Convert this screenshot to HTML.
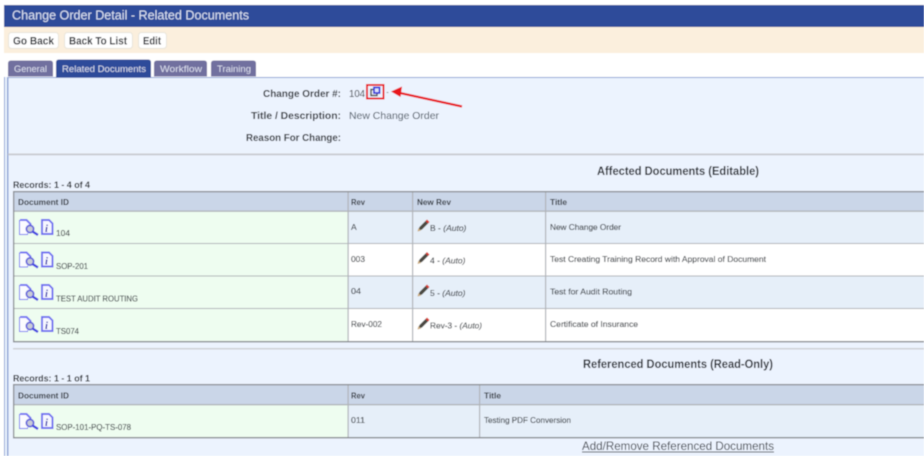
<!DOCTYPE html>
<html><head><meta charset="utf-8"><title>Change Order Detail</title>
<style>
html,body{margin:0;padding:0;width:924px;height:456px;overflow:hidden;background:#fff}
svg{display:block;position:absolute;left:0;top:0}
text{font-family:"Liberation Sans",sans-serif;fill:#33383e;white-space:pre}
.b{font-weight:bold;fill:#24282f}
.h{font-weight:bold;font-size:8.5px;fill:#2c3138}
.s{font-size:8.5px;stroke:#3a3f45;stroke-width:.12px}
.l{font-size:10.5px;font-weight:bold;fill:#2a2e35}
.t{font-size:9.5px;fill:#dcdfee}
</style></head><body>
<svg width="924" height="456" viewBox="0 0 924 456" xmlns="http://www.w3.org/2000/svg">
<defs>
<filter id="bl" x="0" y="0" width="100%" height="100%"><feGaussianBlur stdDeviation="0.45"/></filter>
<g id="ic">
  <path d="M20 220h6.500l4 4v4M20 220v14h8" fill="#fbfbff" stroke="#7474f2" stroke-width="2"/>
  <path d="M20 221h6v5h4v3l-3 5h-7z" fill="#fbfbff"/>
  <circle cx="30" cy="229" r="3.600" fill="#c9ccd6" stroke="#6060dc" stroke-width="1.700"/>
  <path d="M32.500 231.500l5.500 3.500" stroke="#4444e0" stroke-width="2.400"/>
  <path d="M42 220h7l3.500 3.500v10.500h-10.500z" fill="#f6f7ff" stroke="#7070f0" stroke-width="1.900"/>
  <text x="45" y="232" style="font-family:'Liberation Serif',serif;font-weight:bold;font-style:italic;font-size:10.500px;fill:#1c1ca8">i</text>
</g>
<g id="pn">
  <path d="M418 231l1.500-4 6.500-6.500 2.500 2.500-6.500 6.500z" fill="#4c4a42"/>
  <path d="M425.500 221l1.500-1.500 2.500 2.500-1.500 1.500z" fill="#d83a30"/>
  <path d="M417.500 231.500l1-3.500 2.500 2.500z" fill="#c9a878"/>
</g>
</defs>
<g filter="url(#bl)">
<rect width="924" height="456" fill="#fff"/>
<rect x="4" y="5" width="920" height="22" fill="#2e4c9a"/>
<rect x="4" y="27" width="920" height="26" fill="#fbefdd"/>
<text x="12" y="19.500" font-size="13" textLength="237" lengthAdjust="spacingAndGlyphs" style="fill:#dbe2f3">Change Order Detail - Related Documents</text>

<rect x="8.500" y="32.500" width="50" height="16" rx="3" fill="#fff" stroke="#e8e4da"/>
<rect x="64.500" y="32.500" width="68" height="16" rx="3" fill="#fff" stroke="#e8e4da"/>
<rect x="138.500" y="32.500" width="28" height="16" rx="3" fill="#fff" stroke="#e8e4da"/>
<text class="b" x="13" y="44.500" font-size="11" textLength="41" lengthAdjust="spacingAndGlyphs">Go Back</text>
<text class="b" x="69" y="44.500" font-size="11" textLength="58" lengthAdjust="spacingAndGlyphs">Back To List</text>
<text class="b" x="143" y="44.500" font-size="11" textLength="18" lengthAdjust="spacingAndGlyphs">Edit</text>

<rect x="4" y="77" width="920" height="379" fill="#ecf3fe"/>
<rect x="4" y="77" width="1" height="379" fill="#8fa4d6"/>
<rect x="7" y="77" width="1.500" height="379" fill="#8fa4d6"/>
<rect x="7" y="77" width="917" height="1" fill="#8fa4d6"/>

<path d="M8 76.500v-13q0-3 3-3h39q3 0 3 3v13z" fill="#71709f"/>
<path d="M56 77.500v-15q0-3 3-3h89q3 0 3 3v15z" fill="#2e4c9a"/>
<path d="M154 76.500v-13q0-3 3-3h47q3 0 3 3v13z" fill="#71709f"/>
<path d="M211 76.500v-13q0-3 3-3h39q3 0 3 3v13z" fill="#71709f"/>
<text class="t" x="14" y="72" textLength="33" lengthAdjust="spacingAndGlyphs">General</text>
<text class="t" x="62" y="72" textLength="84" lengthAdjust="spacingAndGlyphs">Related Documents</text>
<text class="t" x="160" y="72" textLength="42" lengthAdjust="spacingAndGlyphs">Workflow</text>
<text class="t" x="217" y="72" textLength="34" lengthAdjust="spacingAndGlyphs">Training</text>

<text class="l" x="263" y="97" textLength="78" lengthAdjust="spacingAndGlyphs">Change Order #:</text>
<text class="l" x="251" y="119" textLength="90" lengthAdjust="spacingAndGlyphs">Title / Description:</text>
<text class="l" x="246" y="141" textLength="95" lengthAdjust="spacingAndGlyphs">Reason For Change:</text>
<text x="349" y="97" font-size="10.500" textLength="16" lengthAdjust="spacingAndGlyphs">104</text>
<text x="349" y="119" font-size="10.500" textLength="90" lengthAdjust="spacingAndGlyphs" style="fill:#44505c">New Change Order</text>

<rect x="367" y="85" width="16.500" height="13.500" fill="none" stroke="#e8141c" stroke-width="2"/>
<rect x="371" y="89.500" width="6" height="6" fill="#eef2fa" stroke="#444" stroke-width="1.400"/>
<rect x="374" y="87.500" width="5.500" height="5.500" fill="#dfe3fb" stroke="#3030d8" stroke-width="1.700"/>
<path d="M386.500 92.500h2" stroke="#999" stroke-width="1"/>
<path d="M462 106.500L400 93" stroke="#e8141c" stroke-width="2.200"/>
<path d="M391 91.500l11-5-1.500 10.500z" fill="#e8141c"/>

<rect x="8" y="153.500" width="916" height="1.800" fill="#c9cbd0"/>
<text class="b" x="597" y="175" font-size="11.500" textLength="162" lengthAdjust="spacingAndGlyphs">Affected Documents (Editable)</text>
<text class="b" x="13" y="188" font-size="9.500" textLength="77" lengthAdjust="spacingAndGlyphs">Records: 1 - 4 of 4</text>

<!-- Table 1 -->
<rect x="14" y="192" width="910" height="19" fill="#cad6e8"/>
<rect x="14" y="211" width="334" height="130" fill="#eefdf0"/>
<rect x="348" y="211" width="576" height="32" fill="#e6eff9"/>
<rect x="348" y="243" width="576" height="33" fill="#fff"/>
<rect x="348" y="276" width="576" height="32" fill="#e6eff9"/>
<rect x="348" y="308" width="576" height="33" fill="#fff"/>
<g fill="#b0b3b8">
<rect x="14" y="210.500" width="910" height="1.300"/>
<rect x="14" y="243" width="910" height="1"/>
<rect x="14" y="275.500" width="910" height="1"/>
<rect x="14" y="308" width="910" height="1"/>
<rect x="347.500" y="192" width="1.200" height="149"/>
<rect x="412" y="192" width="1.200" height="149"/>
<rect x="545" y="192" width="1.200" height="149"/>
</g>
<rect x="13" y="191" width="911" height="1.300" fill="#8a8d92"/>
<rect x="13" y="341" width="911" height="1.400" fill="#8a8d92"/>
<rect x="13" y="191" width="1.300" height="151" fill="#8a8d92"/>

<text class="h" x="18" y="205" textLength="51" lengthAdjust="spacingAndGlyphs">Document ID</text>
<text class="h" x="351" y="205" textLength="14" lengthAdjust="spacingAndGlyphs">Rev</text>
<text class="h" x="417" y="205" textLength="34" lengthAdjust="spacingAndGlyphs">New Rev</text>
<text class="h" x="550" y="205" textLength="17" lengthAdjust="spacingAndGlyphs">Title</text>

<use href="#ic"/>
<use href="#ic" y="32.500"/>
<use href="#ic" y="65"/>
<use href="#ic" y="97"/>
<text class="s" x="56" y="236" textLength="14" lengthAdjust="spacingAndGlyphs">104</text>
<text class="s" x="56" y="269" textLength="32" lengthAdjust="spacingAndGlyphs">SOP-201</text>
<text class="s" x="56" y="301.500" textLength="82" lengthAdjust="spacingAndGlyphs">TEST AUDIT ROUTING</text>
<text class="s" x="56" y="334" textLength="23" lengthAdjust="spacingAndGlyphs">TS074</text>

<text class="s" x="351" y="230">A</text>
<text class="s" x="351" y="262" textLength="14" lengthAdjust="spacingAndGlyphs">003</text>
<text class="s" x="351" y="294" textLength="10" lengthAdjust="spacingAndGlyphs">04</text>
<text class="s" x="351" y="327" textLength="31" lengthAdjust="spacingAndGlyphs">Rev-002</text>

<use href="#pn"/>
<use href="#pn" y="32.500"/>
<use href="#pn" y="65"/>
<use href="#pn" y="98"/>
<text class="s" x="430" y="231">B - <tspan font-style="italic">(Auto)</tspan></text>
<text class="s" x="430" y="263.500">4 - <tspan font-style="italic">(Auto)</tspan></text>
<text class="s" x="430" y="296">5 - <tspan font-style="italic">(Auto)</tspan></text>
<text class="s" x="430" y="328.500" textLength="52" lengthAdjust="spacingAndGlyphs">Rev-3 - <tspan font-style="italic">(Auto)</tspan></text>

<text class="s" x="550" y="230" textLength="71" lengthAdjust="spacingAndGlyphs">New Change Order</text>
<text class="s" x="550" y="262" textLength="216" lengthAdjust="spacingAndGlyphs">Test Creating Training Record with Approval of Document</text>
<text class="s" x="550" y="294.500" textLength="82" lengthAdjust="spacingAndGlyphs">Test for Audit Routing</text>
<text class="s" x="550" y="327" textLength="88" lengthAdjust="spacingAndGlyphs">Certificate of Insurance</text>

<rect x="13" y="348" width="911" height="1.500" fill="#cfd1d6"/>
<text class="b" x="583" y="368" font-size="11.500" textLength="190" lengthAdjust="spacingAndGlyphs">Referenced Documents (Read-Only)</text>
<text class="b" x="13" y="381.500" font-size="9.500" textLength="77" lengthAdjust="spacingAndGlyphs">Records: 1 - 1 of 1</text>

<!-- Table 2 -->
<rect x="14" y="385" width="910" height="19" fill="#cad6e8"/>
<rect x="14" y="405" width="334" height="32" fill="#eefdf0"/>
<rect x="348" y="405" width="576" height="32" fill="#e6eff9"/>
<g fill="#b0b3b8">
<rect x="14" y="404" width="910" height="1.300"/>
<rect x="347.500" y="385" width="1.200" height="52"/>
<rect x="479" y="385" width="1.200" height="52"/>
</g>
<rect x="13" y="384" width="911" height="1.300" fill="#8a8d92"/>
<rect x="13" y="437" width="911" height="1.400" fill="#8a8d92"/>
<rect x="13" y="384" width="1.300" height="54" fill="#8a8d92"/>

<text class="h" x="18" y="398.500" textLength="51" lengthAdjust="spacingAndGlyphs">Document ID</text>
<text class="h" x="351" y="398.500" textLength="14" lengthAdjust="spacingAndGlyphs">Rev</text>
<text class="h" x="484" y="398.500" textLength="17" lengthAdjust="spacingAndGlyphs">Title</text>
<use href="#ic" y="194"/>
<text class="s" x="56" y="430" textLength="75" lengthAdjust="spacingAndGlyphs">SOP-101-PQ-TS-078</text>
<text class="s" x="351" y="423" textLength="14" lengthAdjust="spacingAndGlyphs">011</text>
<text class="s" x="484" y="423" textLength="87" lengthAdjust="spacingAndGlyphs">Testing PDF Conversion</text>

<text x="582" y="450" font-size="12" textLength="192" lengthAdjust="spacingAndGlyphs" style="fill:#3c4148">Add/Remove Referenced Documents</text>
<rect x="582" y="451.500" width="192" height="1" fill="#4a4e55"/>
</g>
</svg>
</body></html>
